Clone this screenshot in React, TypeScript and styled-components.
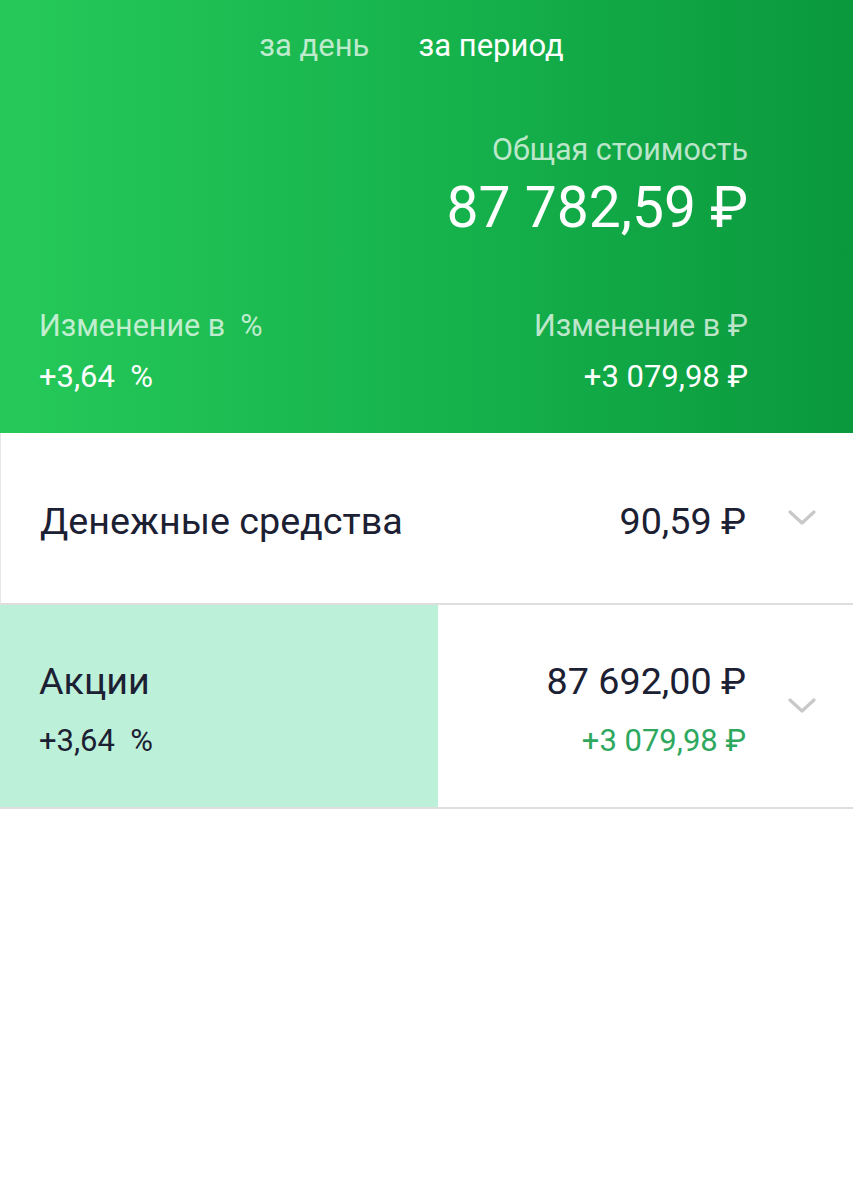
import styled, { createGlobalStyle } from 'styled-components';

const GlobalStyle = createGlobalStyle`
  html, body {
    margin: 0;
    padding: 0;
    background: #ffffff;
  }
  body {
    font-family: Roboto, "Liberation Sans", Arial, sans-serif;
    -webkit-font-smoothing: antialiased;
  }
`;

const Header = styled.header`
  background: linear-gradient(90deg, #26c95a 0%, #15b14b 55%, #0a983d 100%);
  padding: 26px 105px 38px 39px;
  color: #ffffff;
`;

const Tabs = styled.div`
  display: flex;
  justify-content: center;
  gap: 49px;
  padding-left: 36px;
`;

const Tab = styled.span<{ active?: boolean }>`
  font-size: 31px;
  line-height: 40px;
  color: ${(p) => (p.active ? '#ffffff' : 'rgba(255, 255, 255, 0.72)')};
`;

const Total = styled.div`
  display: flex;
  flex-direction: column;
  align-items: flex-end;
  margin-top: 65px;
`;

const Label = styled.div`
  font-size: 30.5px;
  line-height: 38px;
  color: rgba(255, 255, 255, 0.72);
`;

const TotalValue = styled.div`
  font-size: 57px;
  line-height: 60px;
  margin-top: 9px;
`;

const ChangeRow = styled.div`
  display: flex;
  justify-content: space-between;
  margin-top: 69px;
`;

const ChangeCol = styled.div<{ right?: boolean }>`
  display: flex;
  flex-direction: column;
  align-items: ${(p) => (p.right ? 'flex-end' : 'flex-start')};
  gap: 14px;
`;

const ChangeValue = styled.div`
  font-size: 31px;
  line-height: 36px;
  color: #ffffff;
`;

const Row = styled.div<{ tall?: boolean }>`
  position: relative;
  display: flex;
  align-items: center;
  height: ${(p) => (p.tall ? '202px' : '170px')};
  padding: 0 26px 0 39px;
  border-bottom: 2px solid #dedede;
  border-left: ${(p) => (p.tall ? 'none' : '1px solid #e6e6e6')};
  color: #1c2033;
`;

const Fill = styled.div`
  position: absolute;
  left: 0;
  top: 0;
  bottom: 0;
  background: #bdf0d8;
`;

const Side = styled.div<{ right?: boolean }>`
  position: relative;
  display: flex;
  flex-direction: column;
  align-items: ${(p) => (p.right ? 'flex-end' : 'flex-start')};
  gap: 20px;
  padding-top: 6px;
  ${(p) => (p.right ? 'margin-left: auto;' : '')}
`;

const Title = styled.div`
  font-size: 37.7px;
  line-height: 44px;
`;

const Sub = styled.div<{ green?: boolean }>`
  font-size: 31px;
  line-height: 36px;
  color: ${(p) => (p.green ? '#2ea85e' : '#1c2033')};
`;

const Chevron = styled.div`
  position: relative;
  width: 50px;
  margin-left: 31px;
  display: flex;
  justify-content: center;
  align-items: center;
`;

const ChevronIcon = () => (
  <svg width="28" height="16" viewBox="0 0 28 16" fill="none">
    <path d="M2 2 L14 13 L26 2" stroke="#c8c8c8" strokeWidth="3.2" strokeLinecap="round" strokeLinejoin="round" />
  </svg>
);

const positions = [
  { title: 'Денежные средства', value: '90,59 ₽' },
  { title: 'Акции', value: '87 692,00 ₽', percent: '+3,64  %', change: '+3 079,98 ₽', share: 51.35 },
];

export default function App() {
  return (
    <>
      <GlobalStyle />
      <Header>
        <Tabs>
          <Tab>за день</Tab>
          <Tab active>за период</Tab>
        </Tabs>
        <Total>
          <Label>Общая стоимость</Label>
          <TotalValue>87 782,59 ₽</TotalValue>
        </Total>
        <ChangeRow>
          <ChangeCol>
            <Label>Изменение в&nbsp;&nbsp;%</Label>
            <ChangeValue>+3,64&nbsp;&nbsp;%</ChangeValue>
          </ChangeCol>
          <ChangeCol right>
            <Label>Изменение в ₽</Label>
            <ChangeValue>+3 079,98 ₽</ChangeValue>
          </ChangeCol>
        </ChangeRow>
      </Header>
      {positions.map((item, i) => (
        <Row key={i} tall={!!item.change}>
          {item.share && <Fill style={{ width: `${item.share}%` }} />}
          <Side>
            <Title>{item.title}</Title>
            {item.percent && <Sub>{item.percent.replace(/ /g, '\u00a0')}</Sub>}
          </Side>
          <Side right>
            <Title>{item.value}</Title>
            {item.change && <Sub green>{item.change}</Sub>}
          </Side>
          <Chevron>
            <ChevronIcon />
          </Chevron>
        </Row>
      ))}
    </>
  );
}
